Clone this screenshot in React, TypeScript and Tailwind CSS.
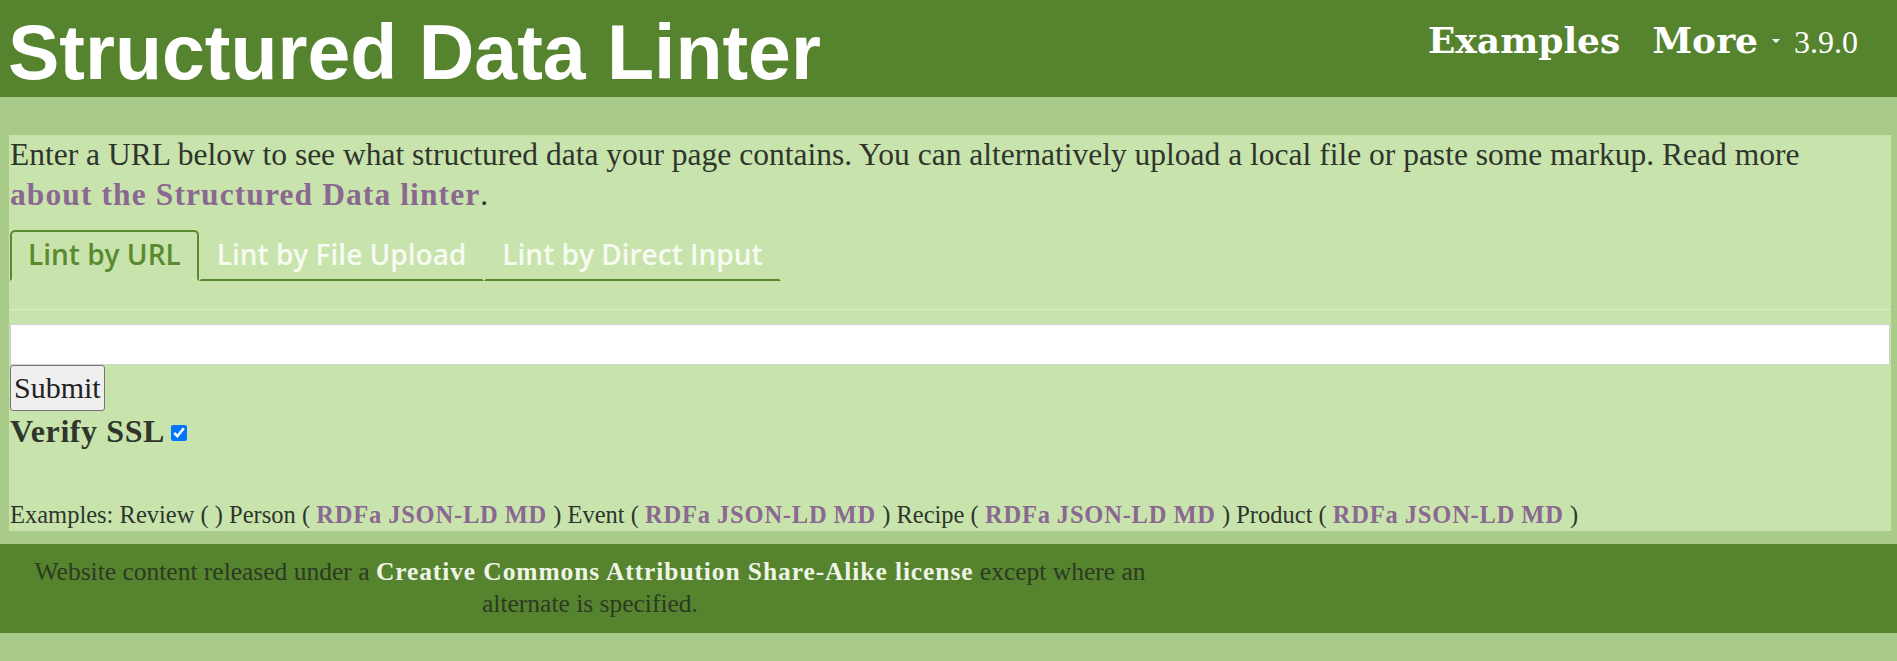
import React from "react";

const serif = { fontFamily: '"Liberation Serif", "Times New Roman", serif' };

function Links() {
  return (
    <>
      ({" "}
      <a className="font-bold tracking-[0.8px] text-[#8a6891]">RDFa</a>{" "}
      <a className="font-bold tracking-[0.8px] text-[#8a6891]">JSON-LD</a>{" "}
      <a className="font-bold tracking-[0.8px] text-[#8a6891]">MD</a> )
    </>
  );
}

export default function App() {
  return (
    <div className="min-h-screen bg-[#a9cb89] font-['Liberation_Serif',serif] text-[#2f352c]">
      <header className="h-[97px] bg-[#56832e] flex justify-between">
        <div className="pl-[8px] pt-[14px] font-['Liberation_Sans',Arial,sans-serif] font-bold text-[77px] leading-[76px] text-white">
          Structured Data Linter
        </div>
        <nav className="flex items-baseline pt-[22px] pr-[39px] text-white h-fit">
          <a className="font-['DejaVu_Serif',serif] font-bold text-[36px] leading-[36px]">Examples</a>
          <a className="ml-[32px] font-['DejaVu_Serif',serif] font-bold text-[36px] leading-[36px]">More</a>
          <span className="ml-[14px] self-start mt-[17px] w-0 h-0 border-x-[4px] border-x-transparent border-t-[4px] border-t-white"></span>
          <span className="ml-[14px] text-[32px] leading-[36px]">3.9.0</span>
        </nav>
      </header>

      <main className="mt-[38px] ml-[9px] mr-[6px] bg-[#c8e4ac] pl-px">
        <p className="text-[31.5px] leading-[40px]">
          Enter a URL below to see what structured data your page contains. You can alternatively upload a local file or paste some markup. Read more{" "}
          <a className="whitespace-nowrap font-bold tracking-[1.1px] text-[#8a6891]">about the Structured Data linter</a>.
        </p>

        <div className="mt-[15px] flex font-['Open_Sans',sans-serif] font-semibold text-[28px] leading-[38px]">
          <div className="border-2 border-[#5a8a30] border-b-transparent rounded-t-[5px] px-[16px] pt-[3px] pb-[6px] text-[#5a8a30]">
            Lint by URL
          </div>
          <div className="border-2 border-transparent border-b-[#5a8a30] px-[16px] pt-[3px] pb-[6px] text-[#f7fbf2]">
            Lint by File Upload
          </div>
          <div className="border-2 border-transparent border-b-[#5a8a30] px-[16px] pt-[3px] pb-[6px] text-[#f7fbf2]">
            Lint by Direct Input
          </div>
        </div>

        <div className="mt-[28px] h-px bg-[#dcedcc]"></div>

        <div className="mt-[14px] pr-px">
          <input type="text" className="block w-full h-[41px] bg-white border border-[#cfd3cb] outline-none" />
        </div>

        <button className="block border border-[#767676] bg-[#efefef] rounded-[3px] px-[3px] py-[4px] text-[30px] leading-[36px] text-[#222]" style={serif}>
          Submit
        </button>

        <div className="flex items-center text-[32px] leading-[40px] font-bold tracking-[0.6px]">
          Verify SSL
          <input type="checkbox" defaultChecked className="ml-[6px] w-[16px] h-[16px] mt-[4px]" />
        </div>

        <div className="mt-[48px] text-[24.5px] leading-[32px]">
          Examples: Review ( ) Person <Links /> Event <Links /> Recipe <Links /> Product <Links />
        </div>
      </main>

      <footer className="mt-[13px] bg-[#56832e] h-[89px] pt-[12px]">
        <div className="w-[1180px] text-center text-[25.5px] leading-[32px] text-[#2b3a22]">
          Website content released under a{" "}
          <a className="font-bold tracking-[0.9px] text-[#eef4e6]">Creative Commons Attribution Share-Alike license</a>{" "}
          except where an
          <br />
          alternate is specified.
        </div>
      </footer>
    </div>
  );
}
